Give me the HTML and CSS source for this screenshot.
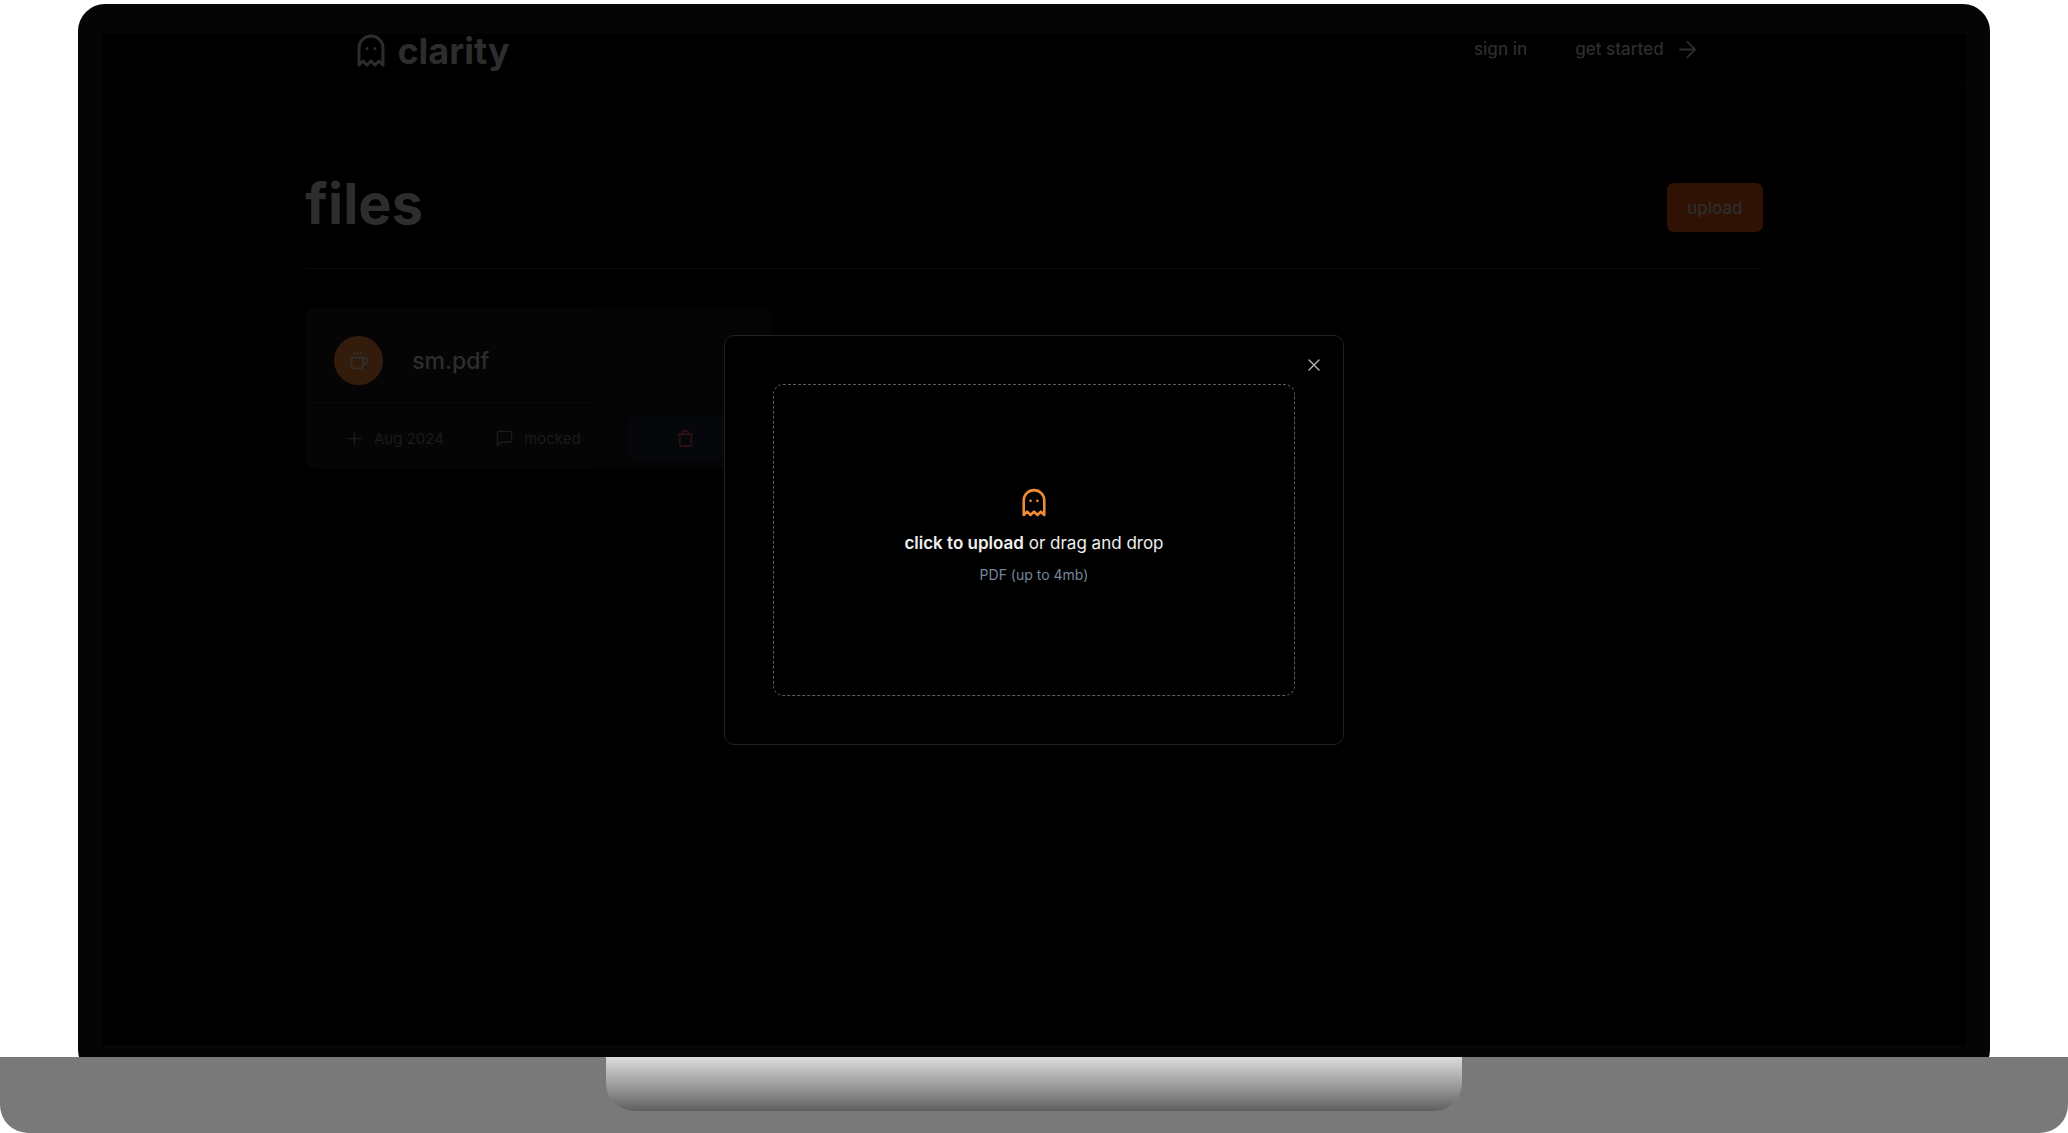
FILE: index.html
```html
<!DOCTYPE html>
<html lang="en">
<head>
<meta charset="utf-8">
<meta name="viewport" content="width=device-width, initial-scale=1">
<title>clarity</title>
<link rel="stylesheet" href="styles.css">
</head>
<body>
<div class="laptop">
  <div class="lid">
    <div class="screen">
      <header class="topbar">
        <a class="brand" href="#">
          <svg class="ghost ghost-brand" viewBox="0 0 28 32" aria-hidden="true"><path d="M2 30V13a12 12 0 0 1 24 0v17l-4-4-4 4-4-4-4 4-4-4z"/><circle cx="10" cy="13.500" r="1.500"/><circle cx="18" cy="13.500" r="1.500"/></svg>
          clarity
        </a>
        <nav class="links">
          <a href="#">sign in</a>
          <a class="started" href="#">get started
            <svg class="icon arrow" viewBox="0 0 18 18" aria-hidden="true"><path d="M1 9h16M9 1l8 8-8 8"/></svg>
          </a>
        </nav>
      </header>
      <main class="content">
        <div class="heading">
          <h1>files</h1>
          <button class="upload" type="button">upload</button>
        </div>
        <article class="card">
          <a class="file" href="#">
            <span class="avatar"><svg class="icon cup" viewBox="0 0 24 24" aria-hidden="true"><path d="M17 8h1a4 4 0 1 1 0 8h-1M3 8h14v9a4 4 0 0 1-4 4H7a4 4 0 0 1-4-4zM6 2v2M10 2v2M14 2v2"/></svg></span>
            <span>sm.pdf</span>
          </a>
          <div class="meta">
            <span class="date"><svg class="icon" viewBox="0 0 24 24" aria-hidden="true"><path d="M3 12h18M12 3v18"/></svg>Aug 2024</span>
            <span class="chat"><svg class="icon" viewBox="0 0 24 24" aria-hidden="true"><path d="M22 15a2 2 0 0 1-2 2H7l-5 5V4a2 2 0 0 1 2-2h16a2 2 0 0 1 2 2z"/></svg>mocked</span>
            <button class="delete" type="button" aria-label="Delete file"><svg class="icon" viewBox="0 0 24 24" aria-hidden="true"><path d="M2 6h20M20 6v15a2 2 0 0 1-2 2H6a2 2 0 0 1-2-2V6M8 6V3a2 2 0 0 1 2-2h4a2 2 0 0 1 2 2v3"/></svg></button>
          </div>
        </article>
      </main>
      <div class="overlay">
        <div class="modal" role="dialog" aria-modal="true" aria-label="Upload a file">
          <button class="close" type="button" aria-label="Close"><svg class="icon" viewBox="0 0 12 12" aria-hidden="true"><path d="M1 1l10 10M11 1L1 11"/></svg></button>
          <button class="dropzone" type="button">
            <svg class="ghost ghost-drop" viewBox="0 0 28 32" aria-hidden="true"><path d="M2 30V13a12 12 0 0 1 24 0v17l-4-4-4 4-4-4-4 4-4-4z"/><circle cx="10" cy="13.500" r="1.500"/><circle cx="18" cy="13.500" r="1.500"/></svg>
            <span class="prompt"><strong>click to upload</strong> or drag and drop</span>
            <span class="hint">PDF (up to 4mb)</span>
          </button>
        </div>
      </div>
    </div>
  </div>
  <div class="base"><div class="notch"></div></div>
</div>
</body>
</html>
```
FILE: styles.css
```css
* {
  box-sizing: border-box;
}

body {
  margin: 0;
  background: #fff;
  color: #2d2d2d;
  font-family: Inter, "Liberation Sans", sans-serif;
}

a {
  color: inherit;
  text-decoration: none;
}

button {
  margin: 0;
  padding: 0;
  border: 0;
  background: none;
  color: inherit;
  font: inherit;
}

.icon,
.ghost {
  display: block;
  flex: none;
  overflow: visible;
  fill: none;
  stroke: currentColor;
  stroke-width: 2;
  stroke-linejoin: round;
  stroke-linecap: round;
}

.ghost {
  stroke-width: 3;
}

.ghost circle {
  fill: currentColor;
  stroke: none;
}

.laptop {
  display: flex;
  flex-direction: column;
  min-height: 100vh;
  padding-top: 4px;
}

.lid {
  display: flex;
  flex: 1;
  width: 92.450%;
  margin: 0 auto -20px;
  padding: 30px 24px 32px;
  border-radius: 27px;
  background: #050505;
}

.screen {
  position: relative;
  flex: 1;
  background: #000;
}

.topbar {
  display: flex;
  align-items: center;
  justify-content: space-between;
  height: 50px;
  padding: 0 14.500% 16px 13.700%;
  border-bottom: 1px solid #030303;
}

.brand {
  display: flex;
  align-items: center;
  gap: 12px;
  font-size: 36px;
  line-height: 36px;
  font-weight: 700;
}

.ghost-brand {
  width: 28px;
  height: 32px;
}

.links,
.started {
  display: flex;
  align-items: center;
  font-size: 17px;
  font-weight: 500;
}

.links {
  gap: 48px;
  padding-bottom: 3px;
}

.started {
  gap: 15px;
}

.arrow {
  width: 17px;
  height: 17px;
}

.content {
  width: 78.200%;
  margin: 0 auto;
  padding-top: 80px;
}

.heading {
  display: flex;
  align-items: flex-end;
  justify-content: space-between;
  height: 105px;
  padding-bottom: 36px;
  border-bottom: 1px solid #0a0a0a;
}

h1 {
  margin: 0;
  font-size: 56px;
  line-height: 56px;
  font-weight: 700;
}

.upload {
  width: 96px;
  height: 49px;
  border-radius: 7px;
  background: #2f1203;
  font-size: 17px;
  font-weight: 500;
}

.card {
  width: 32%;
  margin-top: 39px;
  border-radius: 10px;
  background: linear-gradient(90deg, #050505 62%, #040404 62%);
}

.file {
  display: flex;
  align-items: center;
  gap: 29px;
  height: 98px;
  padding: 8px 29px 0;
  border-bottom: 1px solid #000;
  font-size: 23px;
  font-weight: 500;
}

.avatar {
  display: grid;
  place-items: center;
  width: 49px;
  height: 49px;
  border-radius: 50%;
  background: #341c0c;
  color: #33302e;
}

.cup {
  width: 20px;
  height: 20px;
}

.meta {
  display: grid;
  grid-template-columns: 1fr 1fr 1fr;
  align-items: center;
  gap: 32px;
  padding: 10px 28px 9px;
  color: #1b1b1b;
  font-size: 15px;
}

.date,
.chat {
  display: flex;
  align-items: center;
  justify-content: center;
  gap: 11px;
  white-space: nowrap;
}

.date {
  padding-left: 8px;
}

.meta .icon {
  width: 17px;
  height: 17px;
}

.delete {
  display: grid;
  place-items: center;
  height: 44px;
  border-radius: 7px;
  background: #05070a;
  color: #351313;
}

.overlay {
  position: absolute;
  inset: 0;
  display: grid;
  place-items: center;
}

.modal {
  position: relative;
  width: 33.300%;
  padding: 48px;
  border: 1px solid #202020;
  border-radius: 10px;
  background: #000;
}

.close {
  position: absolute;
  top: 23px;
  right: 23px;
  color: #b4b4b4;
}

.close .icon {
  width: 12px;
  height: 12px;
  stroke-width: 1.400;
}

.dropzone {
  display: flex;
  flex-direction: column;
  align-items: center;
  justify-content: center;
  width: 100%;
  height: 312px;
  padding-bottom: 4px;
  border: 1px dashed #5a5f66;
  border-radius: 10px;
  color: #f0f0f0;
}

.ghost-drop {
  width: 24px;
  height: 28px;
  color: #f08a35;
}

.prompt {
  margin-top: 14px;
  font-size: 17px;
  line-height: 24px;
}

.prompt strong {
  font-weight: 600;
}

.hint {
  margin-top: 9px;
  color: #77859b;
  font-size: 14px;
  line-height: 22px;
}

.base {
  position: relative;
  height: 76px;
  border-radius: 0 0 28px 28px;
  background: #797979;
}

.notch {
  width: 41.350%;
  height: 54px;
  margin: 0 auto;
  border-radius: 0 0 28px 28px;
  background: linear-gradient(#dbdbdb, #a0a0a0 50%, #615e5e);
}
```
